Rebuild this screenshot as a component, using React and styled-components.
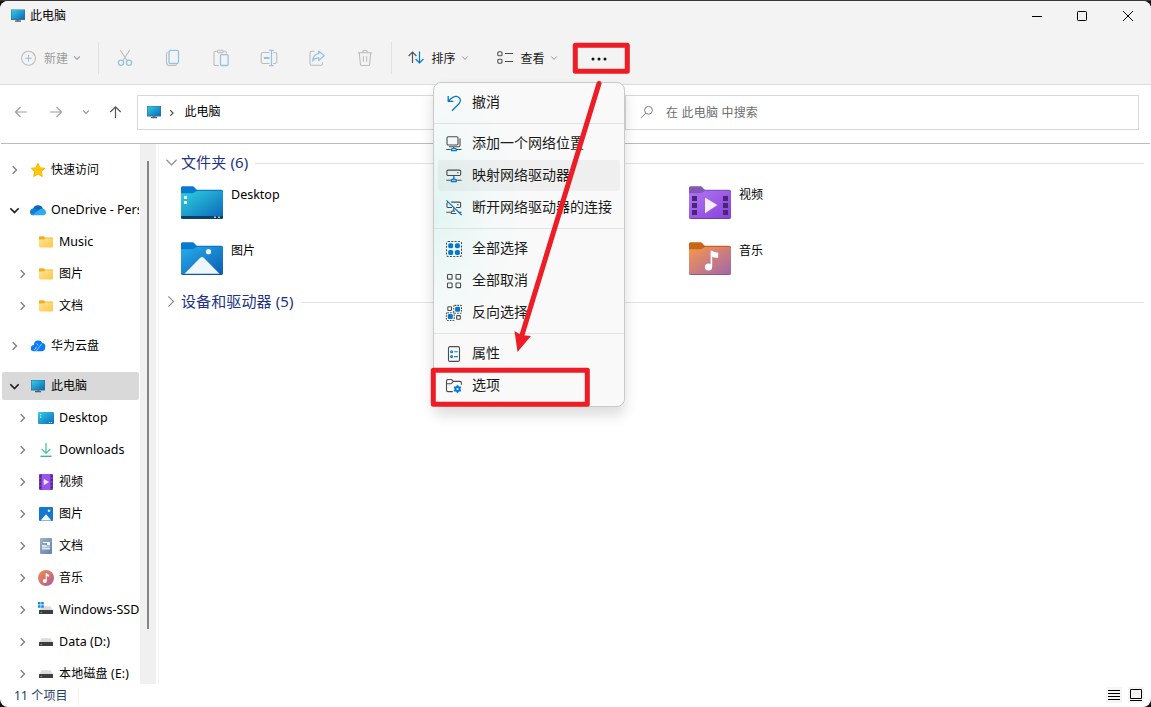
import React from 'react';
import styled, { createGlobalStyle, css } from 'styled-components';

const Global = createGlobalStyle`
  * { box-sizing: border-box; }
  html, body { margin: 0; padding: 0; background: #39363a; overflow: hidden; }
  body { font-family: "Noto Sans", "Noto Sans CJK SC", sans-serif; font-size: 12px; color: #000; }
  svg { display: block; flex: none; overflow: visible; }
`;

const Desk = styled.div`
  position: relative;
  width: 1151px;
  height: 707px;
  padding-top: 1px;
  background: linear-gradient(#39363a 0 1px, #111 1px);
  overflow: hidden;
`;
const Window = styled.div`
  height: 706px;
  display: flex;
  flex-direction: column;
  border-radius: 8px;
  background: #fff;
  overflow: hidden;
`;
const Header = styled.header`
  height: 84px;
  background: #f3f3f3;
  border-bottom: 1px solid #dcdcdc;
`;
const TitleBar = styled.div`
  height: 29px;
  display: flex;
  align-items: center;
  padding-left: 11px;
`;
const Title = styled.span`
  margin-left: 5px;
  line-height: 18px;
`;
const WindowControls = styled.div`
  margin-left: auto;
  display: flex;
`;
const Control = styled.div`
  width: 46px;
  height: 28px;
  display: flex;
  align-items: center;
  justify-content: center;
`;
const Toolbar = styled.div`
  height: 54px;
  display: flex;
  align-items: center;
  padding: 2px 0 0 20px;
`;
const ToolButton = styled.div`
  display: flex;
  align-items: center;
  width: ${p => p.$width}px;
  margin-left: ${p => p.$indent || 0}px;
  color: ${p => (p.$disabled ? '#9c9c9c' : '#1a1a1a')};
  line-height: 18px;
  span { margin-left: ${p => p.$gap || 8}px; margin-right: 6px; padding-top: 1px; }
`;
const ToolDivider = styled.div`
  width: 1px;
  height: 32px;
  background: #e2e2e2;
`;
const ToolIcons = styled.div`
  display: flex;
  gap: 24px;
  padding: 0 14px;
  svg { width: 24px; height: 24px; }
`;
const More = styled.div`
  width: 48px;
  display: flex;
  justify-content: center;
`;
const AddressRow = styled.div`
  height: 59px;
  margin: 0 1px;
  display: flex;
  align-items: flex-start;
  padding: 10px 11px 0 12px;
  border-bottom: 1px solid #bcbcbc;
`;
const NavButtons = styled.div`
  width: 124px;
  height: 34px;
  display: flex;
  align-items: center;
`;
const NavButton = styled.div`
  width: ${p => p.$width}px;
  display: flex;
`;
const Field = styled.div`
  height: 35px;
  width: ${p => p.$width}px;
  display: flex;
  align-items: center;
  border: 1px solid #d9d9d9;
  padding: 0 0 1px ${p => p.$pad}px;
  color: ${p => p.$color || '#000'};
`;
const FieldText = styled.span`
  margin-left: ${p => p.$gap}px;
  padding-top: ${p => p.$drop || 0}px;
  letter-spacing: ${p => p.$track || 0}px;
  line-height: 18px;
  white-space: nowrap;
`;
const FieldChevron = styled.div`
  margin: 1px 0 0 8px;
`;
const SearchGap = styled.div`
  width: 10px;
`;
const Body = styled.div`
  height: 540px;
  display: flex;
`;
const Sidebar = styled.nav`
  width: 140px;
  height: 540px;
  padding: 10px 1px 0 0;
  overflow: hidden;
`;
const TreeGroup = styled.div`
  margin-bottom: 8px;
`;
const TreeRow = styled.div`
  height: 32px;
  display: flex;
  align-items: center;
  padding-left: ${p => (p.$depth ? 14 : 6)}px;
  overflow: hidden;
  white-space: nowrap;
  ${p => p.$selected && css`
    height: 28px;
    margin: 10px 0 2px 2px;
    padding-left: 4px;
    border-radius: 2px;
    background: #d9d9d9;
  `}
`;
const Twist = styled.div`
  width: 17px;
  height: 16px;
  display: flex;
  align-items: center;
  justify-content: center;
  flex: none;
`;
const TreeIcon = styled.div`
  width: 16px;
  height: 16px;
  margin: 0 5px 0 7px;
  flex: none;
`;
const TreeLabel = styled.span`
  font-size: ${p => p.$size || 12}px;
  letter-spacing: ${p => p.$track || 0}px;
  line-height: 18px;
`;
const Scrollbar = styled.div`
  width: 16px;
  padding: 17px 0 0 7px;
  background: #f0f0f0;
`;
const Thumb = styled.div`
  width: 2px;
  height: 468px;
  background: #868686;
`;
const Content = styled.main`
  flex: 1;
  margin-left: 2px;
  border-left: 1px solid #f3f3f3;
  padding: 8px 7px 0 7px;
`;
const SectionHead = styled.div`
  height: 20px;
  display: flex;
  align-items: center;
  color: #1e3287;
  font-size: 15px;
  line-height: 20px;
  letter-spacing: .12px;
  &::after {
    content: '';
    flex: 1;
    height: 1px;
    margin: 2px 0 0 7px;
    background: #e2e2e2;
  }
`;
const HeadTwist = styled.div`
  width: 11px;
  margin-right: 4px;
  display: flex;
  justify-content: center;
`;
const TileGrid = styled.div`
  display: grid;
  grid-template-columns: 254px 254px 254px;
  grid-auto-rows: 34px;
  row-gap: 22px;
  margin: 14px 0 15px 15px;
`;
const Tile = styled.div`
  grid-column: ${p => p.$col};
  display: flex;
  align-items: flex-start;
  gap: 8px;
`;
const TileLabel = styled.span`
  font-size: ${p => p.$size || 12}px;
  line-height: 18px;
`;
const StatusBar = styled.footer`
  flex: 1;
  display: flex;
  align-items: center;
  padding: 0 7px 0 14px;
  color: #1d3b66;
`;
const StatusText = styled.span`
  width: 65px;
  line-height: 18px;
  letter-spacing: .15px;
  border-right: 1px solid #f2f2f2;
`;
const ViewSwitch = styled.div`
  margin: 0 0 1px auto;
  display: flex;
  gap: 6px;
`;
const Menu = styled.div`
  position: absolute;
  left: 433px;
  top: 82px;
  width: 192px;
  height: 325px;
  padding: 3px 4px;
  border: 1px solid #c9c9c9;
  border-radius: 8px;
  background: radial-gradient(ellipse 90px 130px at 0 128px, #e1f5f2, rgba(240, 249, 248, .7) 60%, rgba(249, 249, 249, 0)), #f9f9f9;
  box-shadow: 0 8px 14px rgba(0, 0, 0, .14);
`;
const MenuItem = styled.div`
  height: 32px;
  display: flex;
  align-items: center;
  padding-left: 8px;
  border-radius: 4px;
  font-size: 14px;
  line-height: 20px;
  color: #1a1a1a;
  white-space: nowrap;
  ${p => p.$hover && css`background: linear-gradient(transparent 1px, rgba(0, 0, 0, .04) 1px);`}
  svg { margin-top: 1px; }
  span { margin-left: 10px; }
`;
const MenuLine = styled.div`
  height: 9px;
  margin: 0 -4px;
  padding-top: 5px;
  &::after { content: ''; display: block; height: 1px; background: #e0e2e2; }
`;
const Marks = styled.svg`
  position: absolute;
  left: 0;
  top: 0;
`;

const Chevron = ({ dir = 'right', color = '#858585', size = 8, w = 1.5 }) => (
  <svg width={size} height={size} viewBox="0 0 8 8" fill="none" stroke={color} strokeWidth={w}>
    <path d={dir === 'right' ? 'M1.7 0.3 5.5 4 1.7 7.7' : 'M0.3 2 4 5.8 7.7 2'} />
  </svg>
);

const Monitor = ({ box = '0 0 16 16', w = 16, h = 16 }) => (
  <svg width={w} height={h} viewBox={box}>
    <defs>
      <linearGradient id="screen" x1="0" y1="0" x2="1" y2="1">
        <stop offset="0" stopColor="#34cfe3" /><stop offset="1" stopColor="#0a68bd" />
      </linearGradient>
    </defs>
    <path d="M6.5 12h3v2h-3z" fill="#7d8c98" />
    <path d="M5 13h6v1.2H5z" fill="#53616d" />
    <path d="M1 2h14v10.6H1z" fill="#39718f" />
    <path d="M1.6 2.4h12.8v9.2H1.6z" fill="url(#screen)" />
  </svg>
);

const treeIcons = {
  star: (
    <svg width="16" height="16" viewBox="0 0 16 16">
      <path d="M8 1.3 10 5.8 14.9 6.3 11.3 9.6 12.3 14.5 8 12 3.7 14.5 4.7 9.6 1.1 6.3 6 5.8Z" fill="#ffc60b" stroke="#fcb900" strokeLinejoin="round" />
    </svg>
  ),
  onedrive: (
    <svg width="16" height="16" viewBox="0 0 16 16">
      <path d="M3 7a5.2 5.2 0 0 1 9.8-.6L12 10H3Z" fill="#0f65b8" />
      <path d="M0 10a3.5 3.5 0 0 1 5.5-3L12 11l-8.6 2.2A3.3 3.3 0 0 1 0 10Z" fill="#147fd1" />
      <path d="M2.2 13 10 7.3A3.8 3.8 0 0 1 16 10.2a3 3 0 0 1-3 3H3.5Z" fill="#2eaaf0" />
    </svg>
  ),
  folder: (
    <svg width="16" height="16" viewBox="0 0 16 16">
      <defs>
        <linearGradient id="yellow" x1="0" y1="0" x2="1" y2="1">
          <stop offset="0" stopColor="#ffe596" /><stop offset="1" stopColor="#fdc846" />
        </linearGradient>
      </defs>
      <path d="M1 3.2A1 1 0 0 1 2 2.2h3.6L7 3.6h7a1 1 0 0 1 1 1V8H1Z" fill="#efb01f" />
      <path d="M1 5.6h4.8L7.2 4.3H14a1 1 0 0 1 1 1V12.6a.9.9 0 0 1-.9.9H1.9a.9.9 0 0 1-.9-.9Z" fill="url(#yellow)" />
    </svg>
  ),
  huawei: (
    <svg width="16" height="16" viewBox="0 0 16 16">
      <path d="M.8 10.2A3.4 3.4 0 0 1 4 7a4.4 4.4 0 0 1 8.3-2.2A4 4 0 0 1 15.2 9.6a3.7 3.7 0 0 1-3.7 3.6H4a3 3 0 0 1-3.2-3Z" fill="#087bff" />
      <path d="M6 13.2 12 5.6M6.6 8.6 4.2 12.4M6.6 5.4 8.4 7.6" stroke="#fff" strokeWidth=".6" fill="none" />
    </svg>
  ),
  pc: <Monitor />,
  desktop: (
    <svg width="16" height="16" viewBox="0 0 16 16">
      <path d="M0 3a1 1 0 0 1 1-1h14a1 1 0 0 1 1 1v10a1 1 0 0 1-1 1H1a1 1 0 0 1-1-1Z" fill="url(#screen)" />
      <path d="M2 4h1.2v1.2H2zM2 6.5h1.2v1.2H2zM11 12h1v1h-1zM13 12h1v1h-1z" fill="#c8f2fa" />
    </svg>
  ),
  download: (
    <svg width="16" height="16" viewBox="0 0 16 16" fill="none" strokeWidth="1.4">
      <path d="M8 1v10M3.6 7 8 11.3 12.4 7" stroke="#5cc4a5" />
      <path d="M2.5 14.3h11" stroke="#35b7a6" />
    </svg>
  ),
  video: (
    <svg width="16" height="16" viewBox="0 0 16 16">
      <rect x="1" y="0" width="14" height="16" rx="1" fill="#7a3bc4" />
      <path d="M4 0h8v16H4z" fill="#9a55ee" />
      <path d="M1.5 1.5h1.6V3H1.5zm0 3.7h1.6v1.5H1.5zm0 3.8h1.6v1.5H1.5zm0 3.7h1.6v1.5H1.5zM13 1.5h1.6V3H13zm0 3.7h1.6v1.5H13zM13 9h1.6v1.5H13zm0 3.7h1.6v1.5H13z" fill="#3f226f" />
      <path d="M5.7 4.7 11 8l-5.3 3.3Z" fill="#f0e5ff" />
    </svg>
  ),
  picture: (
    <svg width="16" height="16" viewBox="0 0 16 16">
      <rect x="1" y="1" width="14" height="14" rx="1" fill="#1478cf" />
      <path d="M2.6 14.5 8 8.3l5.4 6.2Z" fill="#f6fbff" />
      <circle cx="11" cy="4.7" r="1.3" fill="#d6ecff" />
    </svg>
  ),
  document: (
    <svg width="16" height="16" viewBox="0 0 16 16">
      <defs>
        <linearGradient id="doc" x1="0" y1="0" x2="1" y2="1">
          <stop offset="0" stopColor="#9fb5cb" /><stop offset="1" stopColor="#5e81a8" />
        </linearGradient>
      </defs>
      <rect x="2" y="0" width="12" height="16" rx="1" fill="url(#doc)" />
      <path d="M5 4.5h4" stroke="#edf4fb" />
      <path d="M4 7h4.5v1.5H12V11.6H4Z" fill="#dce7f2" />
      <path d="M9 4h3v3.4H9z" fill="#fff" />
      <path d="M4 9.5h8" stroke="#9db4cc" strokeWidth=".7" />
    </svg>
  ),
  music: (
    <svg width="16" height="16" viewBox="0 0 16 16">
      <defs>
        <linearGradient id="disc" x1="0" y1="0" x2="1" y2="1">
          <stop offset="0" stopColor="#f0914e" /><stop offset=".55" stopColor="#d36f72" /><stop offset="1" stopColor="#9d5aad" />
        </linearGradient>
      </defs>
      <circle cx="8" cy="8" r="8" fill="url(#disc)" />
      <circle cx="6.8" cy="11" r="2" fill="#fff" />
      <path d="M7.7 3h1.1c.2 1.2 1.2 1.6 2.4 1.7v1.8c-1 0-1.8-.2-2.4-.6V11H7.7Z" fill="#fff" />
    </svg>
  ),
};
const Drive = ({ win }) => (
  <svg width="16" height="16" viewBox="0 0 16 16">
    <path d="M3.5 4.2h9L15 8.4H1Z" fill="#dadcdd" />
    <rect x="1" y="8" width="14" height="4" rx=".6" fill="#3d3d3f" />
    <path d="M2.4 10.4h1.8" stroke="#38c75b" />
    {win && <path d="M0 0h2.6v2.6H0zm3.2 0h2.6v2.6H3.2zM0 3.2h2.6v2.6H0zm3.2 0h2.6v2.6H3.2z" fill="#1b8de0" />}
  </svg>
);
treeIcons.drive = <Drive />;
treeIcons.system = <Drive win />;

const folderColors = {
  desktop: ['#0878d1', '#2ed3e0', '#0b64b9', '#0a3c69'],
  picture: ['#0878d1', '#27aeea', '#0a5cb3', '#0a4d91'],
  video: ['#8257b8', '#b275f5', '#8740d9', '#6936a9'],
  music: ['#c66513', '#f9964d', '#a067ac', '#8a5275'],
};
const BigFolder = ({ kind }) => {
  const [tab, from, to, edge] = folderColors[kind];
  return (
    <svg width="42" height="34" viewBox="0 0 42 34">
      <defs>
        <linearGradient id={'f-' + kind} x1="0" y1="0" x2="1" y2="1">
          <stop offset="0" stopColor={from} /><stop offset="1" stopColor={to} />
        </linearGradient>
      </defs>
      <path d="M0 2A1.6 1.6 0 0 1 1.6.2h10.2c1.6 0 2.8 3.6 5 3.6H40.4A1.6 1.6 0 0 1 42 5.4V12H0Z" fill={tab} />
      <path d="M0 7.3h11.5c2.3 0 3.1-2.2 5.3-2.2H40.5A1.5 1.5 0 0 1 42 6.6V31.2A1.6 1.6 0 0 1 40.4 32.8H1.6A1.6 1.6 0 0 1 0 31.2Z" fill={'url(#f-' + kind + ')'} />
      <path d="M.4 31.8a1.6 1.6 0 0 0 1.2.7h38.8a1.6 1.6 0 0 0 1.2-.7" fill="none" stroke={edge} strokeWidth=".9" />
      {kind === 'desktop' && (
        <>
          <path d="M0 30.1h42v1.1A1.6 1.6 0 0 1 40.4 32.8H1.6A1.6 1.6 0 0 1 0 31.2Z" fill="#0b4069" />
          <path d="M3 10h3v3H3zm0 5h3v3H3z" fill="#f2ffff" />
          <path d="M33 30.4h2v1.7h-2zm4 0h2v1.7h-2z" fill="#b7cad9" />
        </>
      )}
      {kind === 'picture' && (
        <>
          <path d="M3.5 31.8 19 15.9c1.3-1.3 2.7-1.3 4 0L38.5 31.8Z" fill="#edf5fd" />
          <circle cx="27.5" cy="9.7" r="2.6" fill="#f5fbff" />
        </>
      )}
      {kind === 'video' && (
        <>
          <path d="M3 10h5v5H3zm0 7h5v5H3zm0 7h5v5H3zM34 10h5v5h-5zm0 7h5v5h-5zm0 7h5v5h-5z" fill="#472775" />
          <path d="M16 11.4 28.3 19 16 27.3Z" fill="#f5effb" />
        </>
      )}
      {kind === 'music' && (
        <>
          <circle cx="19.5" cy="25" r="3.6" fill="#fff" />
          <path d="M21.6 8.7h1.6c1.3 1.3 3.4 1.7 6 1.8v5.2c-2.6 0-4.8-.3-6-1V25h-1.6Z" fill="#fff" />
        </>
      )}
    </svg>
  );
};

const G = '#bcbcbc';
const B = '#93c2e6';
const ToolSvg = ({ children }) => (
  <svg viewBox="0 0 24 24" fill="none" stroke={G} strokeWidth="1.1">{children}</svg>
);

const K = '#4c4c4c';
const A = '#0078d4';
const MenuSvg = ({ children }) => (
  <svg width="16" height="16" viewBox="0 0 16 16" fill="none" stroke={K} strokeWidth="1.1" strokeLinejoin="round">{children}</svg>
);
const menuIcons = {
  undo: (
    <MenuSvg>
      <path d="M2.2 1v5.3h5.2M2.4 6C4.8 3.4 7.5 1 10.5 1.3c3.4.4 5.4 4.2 2.7 7.2L6 15.7" stroke={A} strokeWidth="1.3" />
    </MenuSvg>
  ),
  location: (
    <MenuSvg>
      <rect x="1" y=".8" width="11" height="8.2" rx="1.2" />
      <path d="M14 2.4v6.8a1.6 1.6 0 0 1-1.6 1.6H3M.3 13.5h4.4M10.7 13.5h4.8" />
      <path d="M7.8 11v1.7M5.5 13c1-.9 3.8-.9 4.8 0v1.7H5.5Z" stroke={A} strokeWidth="1.3" />
    </MenuSvg>
  ),
  map: (
    <MenuSvg>
      <rect x=".9" y="2.1" width="13.8" height="5.4" rx="1.2" />
      <path d="M11 4.8h1.6M.3 12.3h4.2M7.8 7.5v3M11.2 12.3h4.3" />
      <path d="M5.3 11.7c1-.9 4-.9 5 0v1.8h-5ZM7.8 9.6v1.5" stroke={A} strokeWidth="1.3" />
    </MenuSvg>
  ),
  cut: (
    <MenuSvg>
      <path d="M5.2 2.1h8.2a1.2 1.2 0 0 1 1.2 1.2v3a1.2 1.2 0 0 1-1.2 1.2H10M2 2.5c-.7.2-1.1.6-1.1 1.3v2.5a1.2 1.2 0 0 0 1.2 1.2H6M11 4.8h1.6M7.8 7.8v3M.3 12.3h4.2M5.3 11.7c.7-.7 2.5-.9 3.8-.5M5.3 11.7v1.8h5M12.7 12.3h2.8" />
      <path d="M.4.4 15.6 15" stroke={A} strokeWidth="1.2" />
    </MenuSvg>
  ),
  all: (
    <MenuSvg>
      <rect x=".5" y=".5" width="15" height="15" rx="1.5" strokeDasharray="2 1.3" />
      <g fill={A} stroke="none">
        <rect x="2.2" y="2.2" width="5" height="5" rx="1.7" /><rect x="8.9" y="2.2" width="5" height="5" rx="1.7" />
        <rect x="2.2" y="8.9" width="5" height="5" rx="1.7" /><rect x="8.9" y="8.9" width="5" height="5" rx="1.7" />
      </g>
    </MenuSvg>
  ),
  none: (
    <MenuSvg>
      <rect x="1.5" y="1.5" width="4.6" height="4.6" rx=".7" /><rect x="10" y="1.5" width="4.6" height="4.6" rx=".7" />
      <rect x="1.5" y="10" width="4.6" height="4.6" rx=".7" /><rect x="10" y="10" width="4.6" height="4.6" rx=".7" />
    </MenuSvg>
  ),
  invert: (
    <MenuSvg>
      <rect x="1.8" y="1.8" width="3.7" height="3.7" rx=".7" /><rect x="10.6" y="10.6" width="3.7" height="3.7" rx=".7" />
      <rect x="7.7" y=".4" width="7.8" height="7.8" rx="1" strokeDasharray="1.6 1.1" /><rect x=".4" y="7.7" width="7.8" height="7.8" rx="1" strokeDasharray="1.6 1.1" />
      <g fill={A} stroke="none"><rect x="9.1" y="1.8" width="5" height="5" rx="1.4" /><rect x="1.8" y="9.1" width="5" height="5" rx="1.4" /></g>
    </MenuSvg>
  ),
  props: (
    <MenuSvg>
      <rect x="2.5" y=".6" width="11" height="14.8" rx="1.5" />
      <g stroke={A}><circle cx="5.6" cy="5.7" r="1" /><circle cx="5.6" cy="10.6" r="1" /><path d="M8.2 5.7h3.6M8.2 10.6h3.6" /></g>
    </MenuSvg>
  ),
  options: (
    <MenuSvg>
      <path d="M6.8 13.6H2.2A1.7 1.7 0 0 1 .5 11.9V3.2a1.7 1.7 0 0 1 1.7-1.7h3.1l2 1.9h6.4a1.7 1.7 0 0 1 1.7 1.7v1.6M.5 5.7h4.6l2.2-2.1" />
      <path d="m11.5 6.9 1.2 2 2.3 0-1.1 2.1 1.1 2.1-2.3 0-1.2 2-1.2-2-2.3 0 1.1-2.1-1.1-2.1 2.3 0Z" fill={A} stroke={A} strokeWidth=".8" />
      <circle cx="11.5" cy="11" r="1.1" fill="#f9f9f9" stroke="none" />
    </MenuSvg>
  ),
};

const tree = [
  [{ t: '快速访问', i: 'star' }],
  [
    { t: 'OneDrive - Pers', i: 'onedrive', open: true, s: 12.5 },
    { t: 'Music', i: 'folder', d: 1, leaf: true, s: 12.5 },
    { t: '图片', i: 'folder', d: 1 },
    { t: '文档', i: 'folder', d: 1 },
  ],
  [{ t: '华为云盘', i: 'huawei' }],
];
const pcTree = [
  { t: 'Desktop', i: 'desktop', s: 12.5 },
  { t: 'Downloads', i: 'download', s: 12.5 },
  { t: '视频', i: 'video' },
  { t: '图片', i: 'picture' },
  { t: '文档', i: 'document' },
  { t: '音乐', i: 'music' },
  { t: 'Windows-SSD', i: 'system', s: 12.5 },
  { t: 'Data (D:)', i: 'drive', s: 12.5 },
  { t: '本地磁盘 (E:)', i: 'drive', k: 0.2 },
];

const TreeItem = ({ item, depth, selected }) => (
  <TreeRow $depth={depth} $selected={selected}>
    <Twist>
      {!item.leaf && (item.open
        ? <Chevron dir="down" color="#222" size={9} />
        : <Chevron />)}
    </Twist>
    <TreeIcon>{treeIcons[item.i]}</TreeIcon>
    <TreeLabel $size={item.s} $track={item.k}>{item.t}</TreeLabel>
  </TreeRow>
);

const menu = [
  [['undo', '撤消']],
  [['location', '添加一个网络位置'], ['map', '映射网络驱动器', true], ['cut', '断开网络驱动器的连接']],
  [['all', '全部选择'], ['none', '全部取消'], ['invert', '反向选择']],
  [['props', '属性'], ['options', '选项']],
];

export default function App() {
  return (
    <Desk>
      <Global />
      <Window>
        <Header>
          <TitleBar>
            <Monitor box="1 1.5 14 14" w={14} h={14} />
            <Title>此电脑</Title>
            <WindowControls>
              <Control><svg width="10" height="10"><path d="M1 5.5h10" stroke="#000" /></svg></Control>
              <Control><svg width="10" height="10"><rect x=".5" y=".5" width="9" height="9" rx=".8" fill="none" stroke="#000" /></svg></Control>
              <Control><svg width="10" height="10"><path d="M0 0 10 10M10 0 0 10" stroke="#000" /></svg></Control>
            </WindowControls>
          </TitleBar>
          <Toolbar>
            <ToolButton $width={78} $gap={7} $disabled>
              <svg width="17" height="17" viewBox="0 0 17 17" fill="none">
                <circle cx="8.5" cy="8.2" r="7" stroke={G} strokeWidth="1.1" />
                <path d="M8.5 4.9v6.6M5.2 8.2h6.6" stroke={B} strokeWidth="1.1" />
              </svg>
              <span>新建</span>
              <Chevron dir="down" color="#a0a0a0" size={6} w={1.5} />
            </ToolButton>
            <ToolDivider />
            <ToolIcons>
              <ToolSvg>
                <path d="M7.3 4 14.4 15.3M16.7 4 9.6 15.3" />
                <circle cx="8" cy="16.8" r="2.6" stroke={B} strokeWidth="1.3" /><circle cx="16" cy="16.8" r="2.6" stroke={B} strokeWidth="1.3" />
              </ToolSvg>
              <ToolSvg>
                <path d="M6.5 6.3C5.7 6.7 5.5 7.4 5.5 8v8.5a3 3 0 0 0 3 3H14c.9 0 1.5-.4 1.9-1" />
                <rect x="8" y="4.3" width="9.5" height="13.2" rx="1.5" stroke={B} strokeWidth="1.3" />
              </ToolSvg>
              <ToolSvg>
                <path d="M9.8 19.5H6.3a1.3 1.3 0 0 1-1.3-1.3V6.6a1.3 1.3 0 0 1 1.3-1.3h2.2M14 5.3h2a1.3 1.3 0 0 1 1.3 1.3v.9" />
                <rect x="8.4" y="4.2" width="5.8" height="2.4" rx="1.2" />
                <rect x="11.5" y="8.6" width="7.6" height="10.9" rx="1" stroke={B} strokeWidth="1.3" />
              </ToolSvg>
              <ToolSvg>
                <path d="M12.5 6.5H6A1.8 1.8 0 0 0 4.2 8.3v7.4A1.8 1.8 0 0 0 6 17.5h6.5M16.2 6.5H18a1.8 1.8 0 0 1 1.8 1.8v7.4a1.8 1.8 0 0 1-1.8 1.8h-1.8" />
                <path d="M12.2 4.3h4.6M12.2 19.6h4.6M14.5 4.3v15.3" stroke={B} strokeWidth="1.2" /><path d="M7 12h5.5" stroke={B} strokeWidth="2.2" />
              </ToolSvg>
              <ToolSvg>
                <path d="M9.6 5.3H6.8A1.8 1.8 0 0 0 5 7.1V17.5a1.8 1.8 0 0 0 1.8 1.8h9a1.8 1.8 0 0 0 1.8-1.8v-1.2" />
                <path d="M13.7 5 19.2 9.8 13.7 14.5v-2.7c-2.6 0-4.5.7-6 3.2.4-4.4 2.3-7 6-7.3Z" stroke={B} strokeWidth="1.2" strokeLinejoin="round" />
              </ToolSvg>
              <ToolSvg>
                <path d="M5 6.7h14M9.6 6.5a2.4 2.2 0 0 1 4.8 0M6.3 6.8l1.1 11.3a1.6 1.6 0 0 0 1.6 1.4h6a1.6 1.6 0 0 0 1.6-1.4l1.1-11.3M10.4 10.2v5.6M13.6 10.2v5.6" />
              </ToolSvg>
            </ToolIcons>
            <ToolDivider />
            <ToolButton $width={89} $indent={16} $gap={7.5}>
              <svg width="16" height="16" viewBox="0 0 16 16" fill="none" strokeWidth="1.2">
                <path d="M4.5 13V2.2M.6 6 4.5 2 8.4 6" stroke="#555" />
                <path d="M11.5 1.5v11.3M7.6 9l3.9 4 3.9-4" stroke={A} />
              </svg>
              <span>排序</span>
              <Chevron dir="down" color="#909090" size={6} w={1.3} />
            </ToolButton>
            <ToolButton $width={78} $gap={7.5}>
              <svg width="16" height="16" viewBox="0 0 16 16" fill="none" stroke={K} strokeWidth="1.1">
                <rect x=".8" y="1.8" width="4.2" height="4" rx="1.1" /><rect x=".8" y="9.2" width="4.2" height="4" rx="1.1" />
                <path d="M8 3.5h8M8 11.5h8" />
              </svg>
              <span>查看</span>
              <Chevron dir="down" color="#909090" size={6} w={1.3} />
            </ToolButton>
            <More>
              <svg width="18" height="6"><g fill="#111"><circle cx="3" cy="4" r="1.5" /><circle cx="9" cy="4" r="1.5" /><circle cx="15" cy="4" r="1.5" /></g></svg>
            </More>
          </Toolbar>
        </Header>
        <AddressRow>
          <NavButtons>
            <NavButton $width={35}><svg width="16" height="12" fill="none" stroke="#a0a0a0" strokeWidth="1.2"><path d="M14 6H2.5M7.5 1 2.5 6l5 5" /></svg></NavButton>
            <NavButton $width={35}><svg width="16" height="12" fill="none" stroke="#a0a0a0" strokeWidth="1.2"><path d="M2 6h11.5M8.5 1l5 5-5 5" /></svg></NavButton>
            <NavButton $width={25}><Chevron dir="down" color="#999" size={6} w={1.5} /></NavButton>
            <NavButton $width={16}><svg width="14" height="14" fill="none" stroke="#555" strokeWidth="1.2"><path d="M7.5 13V1.8M2.3 7l5.2-5.2L12.7 7" /></svg></NavButton>
          </NavButtons>
          <Field $width={478} $pad={9}>
            <Monitor box="1 1 14 14" w={14} h={14} />
            <FieldChevron><Chevron color="#555" size={6} /></FieldChevron>
            <FieldText $gap={9.5}>此电脑</FieldText>
          </Field>
          <SearchGap />
          <Field $width={514} $pad={14} $color="#6d6d6d">
            <svg width="14" height="14" fill="none" stroke="#808080"><circle cx="8.5" cy="5.3" r="3.9" /><path d="M5.8 8.2 1 13" /></svg>
            <FieldText $gap={12} $track={0.2} $drop={2}>在 此电脑 中搜索</FieldText>
          </Field>
        </AddressRow>
        <Body>
          <Sidebar>
            {tree.map((group, g) => (
              <TreeGroup key={g}>
                {group.map(item => <TreeItem key={item.t} item={item} depth={item.d} />)}
              </TreeGroup>
            ))}
            <TreeItem item={{ t: '此电脑', i: 'pc', open: true }} selected />
            {pcTree.map(item => <TreeItem key={item.t} item={item} depth={1} />)}
          </Sidebar>
          <Scrollbar><Thumb /></Scrollbar>
          <Content>
            <SectionHead>
              <HeadTwist><Chevron dir="down" color="#8a8a8a" size={11} w={0.8} /></HeadTwist>
              文件夹 (6)
            </SectionHead>
            <TileGrid>
              <Tile $col={1}><BigFolder kind="desktop" /><TileLabel $size={12.5}>Desktop</TileLabel></Tile>
              <Tile $col={3}><BigFolder kind="video" /><TileLabel>视频</TileLabel></Tile>
              <Tile $col={1}><BigFolder kind="picture" /><TileLabel>图片</TileLabel></Tile>
              <Tile $col={3}><BigFolder kind="music" /><TileLabel>音乐</TileLabel></Tile>
            </TileGrid>
            <SectionHead>
              <HeadTwist><Chevron color="#8a8a8a" size={11} w={0.8} /></HeadTwist>
              设备和驱动器 (5)
            </SectionHead>
          </Content>
        </Body>
        <StatusBar>
          <StatusText>11 个项目</StatusText>
          <ViewSwitch>
            <svg width="16" height="16"><rect width="16" height="16" fill="#f5f5f5" /><path d="M2 3.5h12M2 6.5h12M2 9.5h12M2 12.5h12" stroke="#000" /></svg>
            <svg width="16" height="16"><rect width="16" height="16" fill="#f5f5f5" /><path d="M2.5 2.5h11v9h-11zM2 13.5h12" stroke="#000" fill="none" /></svg>
          </ViewSwitch>
        </StatusBar>
      </Window>
      <Menu>
        {menu.map((group, g) => (
          <React.Fragment key={g}>
            {g > 0 && <MenuLine />}
            {group.map(([icon, text, hover]) => (
              <MenuItem key={icon} $hover={hover}>{menuIcons[icon]}<span>{text}</span></MenuItem>
            ))}
          </React.Fragment>
        ))}
      </Menu>
      <Marks width="1151" height="707" fill="none" stroke="#ee1c25" strokeWidth="5" strokeLinejoin="round" strokeLinecap="round">
        <rect x="575.3" y="45.3" width="52" height="26" />
        <rect x="433.3" y="370.3" width="154" height="34" />
        <path d="M599 83.5 522 335" />
        <path d="M517.5 352 514.5 331 521 335 531 336Z" fill="#ee1c25" stroke="none" />
      </Marks>
    </Desk>
  );
}
